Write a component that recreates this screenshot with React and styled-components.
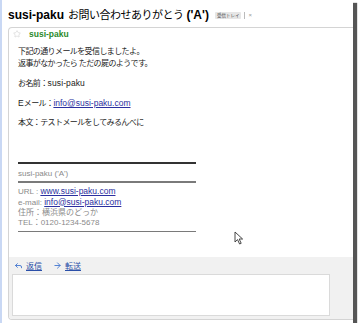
import React from "react";
import styled, { createGlobalStyle } from "styled-components";
import { Star, Reply, ArrowRight } from "lucide-react";

const GlobalStyle = createGlobalStyle`
  body {
    margin: 0;
    background: #fff;
    font-family: "Liberation Sans", "Noto Sans CJK JP", sans-serif;
  }
`;

const Frame = styled.div`
  position: relative;
  box-sizing: border-box;
  width: 353px;
  height: 323px;
  background: #fff;
  border-left: 2px solid #c9d8f4;
  box-shadow: 4px 3px 1px #555;
  display: flex;
  flex-direction: column;
`;

const Header = styled.div`
  display: flex;
  align-items: center;
  height: 27px;
  padding-left: 6px;
  padding-top: 3px;
  box-sizing: border-box;
`;

const Title = styled.h1`
  margin: 0;
  font-size: 12px;
  line-height: 14px;
  font-weight: bold;
  color: #000;
  white-space: nowrap;
`;

const TitleJa = styled.span`
  font-weight: normal;
  font-size: 11px;
  letter-spacing: -0.5px;
  margin: 0 3px 0 4px;
`;

const Tag = styled.span`
  margin-left: 6px;
  background: #e6e6e6;
  color: #444;
  font-size: 4.5px;
  line-height: 7px;
  padding: 0 2px;
  border-radius: 1px;
`;

const TagClose = styled.span`
  margin-left: 3px;
  padding-left: 3px;
  border-left: 1px solid #bbb;
  color: #999;
  font-size: 6px;
  line-height: 7px;
`;

const Card = styled.div`
  flex: 1;
  margin: 0 0 3px 6px;
  border: 1px solid #d4d4d4;
  border-right: none;
  border-radius: 4px 0 0 4px;
  display: flex;
  flex-direction: column;
  overflow: hidden;
`;

const SenderRow = styled.div`
  display: flex;
  align-items: center;
  height: 12px;
  padding-left: 4px;
`;

const SenderName = styled.span`
  margin-left: 8px;
  color: #2a8a2a;
  font-weight: bold;
  font-size: 8.5px;
`;

const Body = styled.div`
  margin-top: 6px;
  padding-left: 9px;
  color: #222;
  font-size: 8px;
  line-height: 12px;
  letter-spacing: -0.6px;
`;

const Para = styled.p`
  margin: 0 0 7px;

  &:last-child {
    margin-bottom: 0;
  }
`;

const Latin = styled.span`
  font-size: 8.5px;
  letter-spacing: 0.1px;
`;

const Link = styled.a`
  color: #2b2fa0;
  text-decoration: underline;
  font-size: 8.5px;
  letter-spacing: 0;
`;

const Signature = styled.div`
  width: 178px;
  margin: 33px 0 0 9px;
  color: #8a8a8a;
  font-size: 8px;
`;

const Rule = styled.div`
  height: ${({ thick }) => (thick ? "2px" : "1.5px")};
  background: ${({ thick }) => (thick ? "#333" : "#7a7a7a")};
`;

const SigName = styled.div`
  padding: 4px 0 2px;
  line-height: 11px;
`;

const SigLines = styled.div`
  padding: 3px 0 3px;
  line-height: 10px;
`;

const ReplyArea = styled.div`
  margin-top: auto;
  height: 62px;
  box-sizing: border-box;
  background: #f1f1f1;
  padding: 3px 0 3px 3px;
  display: flex;
  flex-direction: column;
`;

const Actions = styled.div`
  display: flex;
  align-items: center;
  gap: 11px;
  height: 11px;
  padding-left: 2px;
  margin-bottom: 3px;
`;

const Action = styled.a`
  display: flex;
  align-items: center;
  gap: 3px;
  color: #2a4fa8;
  font-size: 8px;
  text-decoration: underline;
`;

const ReplyBox = styled.div`
  width: 318px;
  flex: 1;
  background: #fff;
  border: 1px solid #dadada;
  box-sizing: border-box;
`;

const Cursor = styled.svg`
  position: absolute;
  left: 232px;
  top: 231px;
`;

const App = () => (
  <>
    <GlobalStyle />
    <Frame>
      <Header>
        <Title>
          susi-paku<TitleJa>お問い合わせありがとう</TitleJa>('A')
        </Title>
        <Tag>受信トレイ</Tag>
        <TagClose>×</TagClose>
      </Header>
      <Card>
        <SenderRow>
          <Star size={8} color="#c8c8c8" strokeWidth={1.5} />
          <SenderName>susi-paku</SenderName>
        </SenderRow>
        <Body>
          <Para>
            下記の通りメールを受信しましたよ。
            <br />
            返事がなかったら ただの屍のようです。
          </Para>
          <Para>
            お名前：<Latin>susi-paku</Latin>
          </Para>
          <Para>
            <Latin>E</Latin>メール：<Link>info@susi-paku.com</Link>
          </Para>
          <Para>本文：テストメールをしてみるんべに</Para>
        </Body>
        <Signature>
          <Rule thick />
          <SigName>susi-paku ('A')</SigName>
          <Rule />
          <SigLines>
            URL : <Link>www.susi-paku.com</Link>
            <br />
            e-mail: <Link>info@susi-paku.com</Link>
            <br />
            住所：横浜県のどっか
            <br />
            TEL：0120-1234-5678
          </SigLines>
          <Rule />
        </Signature>
        <ReplyArea>
          <Actions>
            <Action>
              <Reply size={9} color="#4a7bd0" strokeWidth={2.5} />
              返信
            </Action>
            <Action>
              <ArrowRight size={9} color="#4a7bd0" strokeWidth={2.5} />
              転送
            </Action>
          </Actions>
          <ReplyBox />
        </ReplyArea>
      </Card>
      <Cursor width="11" height="14" viewBox="0 0 11 14">
        <path
          d="M1 1 L1 11 L3.5 8.6 L5.6 13 L7.2 12.3 L5.2 8 L8.6 8 Z"
          fill="#fff"
          stroke="#333"
          strokeWidth="0.9"
        />
      </Cursor>
    </Frame>
  </>
);

export default App;
